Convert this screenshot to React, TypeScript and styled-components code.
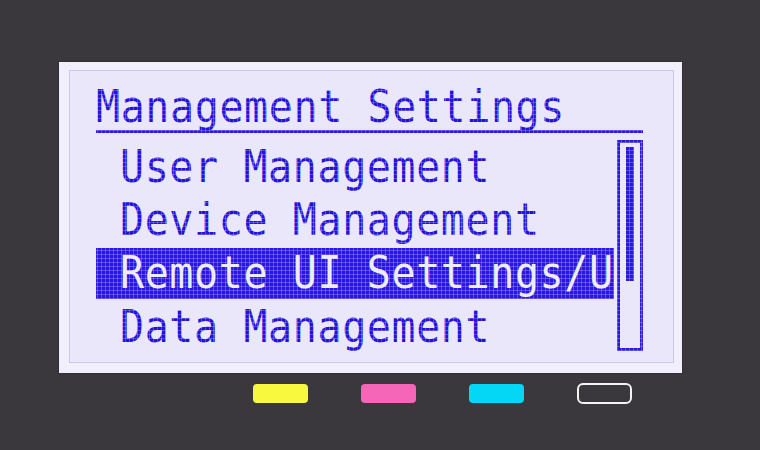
import React from "react";
import styled, { createGlobalStyle } from "styled-components";

const Global = createGlobalStyle`
  html, body { margin: 0; padding: 0; background: #3a383c; }
  body { width: 760px; height: 450px; overflow: hidden; }
`;

const Page = styled.div`
  width: 760px;
  height: 450px;
  background: #3a383c;
  display: flex;
  flex-direction: column;
  padding: 62px 0 0 59px;
  box-sizing: border-box;
`;

const Screen = styled.div`
  width: 623px;
  height: 311px;
  background: #f1effc;
  padding: 8px 8px 10px 10px;
  box-sizing: border-box;
  display: flex;
  box-shadow: 0 0 2px rgba(0, 0, 0, 0.4);
`;

const Panel = styled.div`
  position: relative;
  flex: 1;
  border: 1px solid #cbc7e6;
  background: #e9e7f9;
  display: flex;
  flex-direction: column;
  padding-left: 26px;
`;

const Grid = styled.div`
  position: absolute;
  inset: 0;
  pointer-events: none;
  background-image:
    repeating-linear-gradient(90deg, transparent 0 3px, rgba(233, 231, 249, 0.25) 3px 4px),
    repeating-linear-gradient(0deg, transparent 0 3px, rgba(233, 231, 249, 0.25) 3px 4px);
`;

const LcdText = styled.span`
  display: inline-block;
  font-family: "DejaVu Sans Mono", "Liberation Mono", monospace;
  font-size: 40px;
  line-height: 40px;
  letter-spacing: 0.6px;
  transform: scaleY(1.12);
  transform-origin: 0 50%;
  white-space: nowrap;
  vertical-align: middle;
`;

const Title = styled.div`
  margin-top: 13px;
  height: 44px;
  display: flex;
  align-items: center;
  color: #2412dc;
`;

const Rule = styled.div`
  margin-top: 2px;
  width: 547px;
  height: 3px;
  background: #2a18e0;
`;

const Body = styled.div`
  margin-top: 7px;
  display: flex;
  align-items: flex-start;
`;

const List = styled.div`
  width: 518px;
  display: flex;
  flex-direction: column;
  margin-top: 1px;
`;

const Row = styled.div<{ $selected?: boolean }>`
  height: ${(p) => (p.$selected ? "51px" : "53px")};
  margin: ${(p) => (p.$selected ? "1px 0 2px" : "0")};
  padding: ${(p) => (p.$selected ? "0 0 3px 24px" : "0 0 3px 24px")};
  box-sizing: border-box;
  display: flex;
  align-items: center;
  color: ${(p) => (p.$selected ? "#eeedff" : "#2412dc")};
  background: ${(p) => (p.$selected ? "#2a16e4" : "transparent")};
`;

const ScrollTrack = styled.div`
  margin-left: 3px;
  width: 26px;
  height: 211px;
  border: 3px solid #2a18e0;
  box-sizing: border-box;
  padding: 4px 0 0 6px;
`;

const ScrollThumb = styled.div`
  width: 8px;
  height: 134px;
  background: #2a18e0;
`;

const Keys = styled.div`
  display: flex;
  gap: 53px;
  margin-top: 11px;
  padding-left: 194px;
`;

const Key = styled.div<{ $color?: string }>`
  width: 55px;
  height: 19px;
  border-radius: 4px;
  box-sizing: border-box;
  background: ${(p) => p.$color ?? "transparent"};
  border: ${(p) => (p.$color ? "none" : "2.5px solid #f4f4f4")};
  ${(p) => (p.$color ? "" : "height: 21px; margin-top: -1px; border-radius: 6px;")}
`;

const items = ["User Management", "Device Management", "Remote UI Settings/U", "Data Management"];

export default function App() {
  return (
    <>
      <Global />
      <Page>
        <Screen>
          <Panel>
            <Title>
              <LcdText>Management Settings</LcdText>
            </Title>
            <Rule />
            <Body>
              <List>
                {items.map((t, i) => (
                  <Row key={t} $selected={i === 2}>
                    <LcdText>{t}</LcdText>
                  </Row>
                ))}
              </List>
              <ScrollTrack>
                <ScrollThumb />
              </ScrollTrack>
            </Body>
            <Grid />
          </Panel>
        </Screen>
        <Keys>
          <Key $color="#f8f83e" />
          <Key $color="#f566b9" />
          <Key $color="#04d7f6" />
          <Key />
        </Keys>
      </Page>
    </>
  );
}
